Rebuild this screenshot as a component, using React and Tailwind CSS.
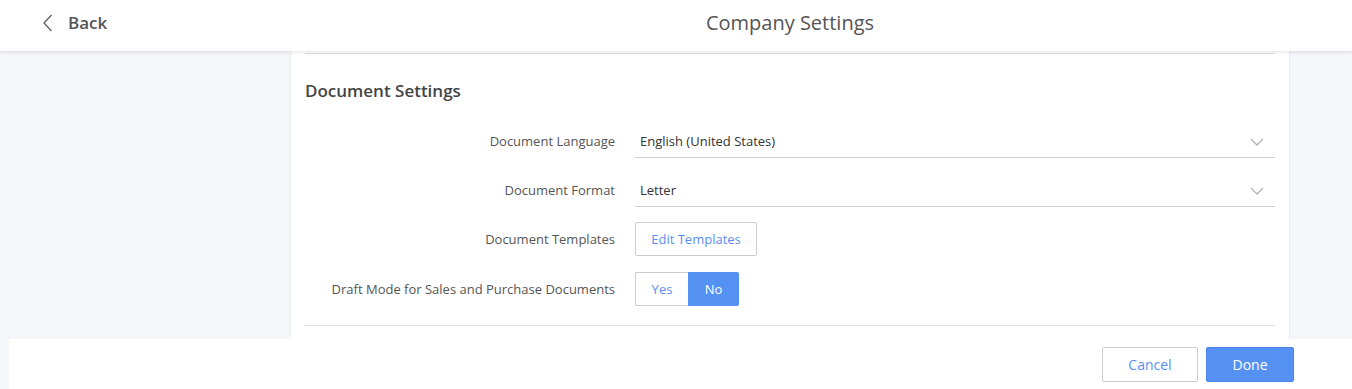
import React from 'react';

const font = { fontFamily: '"Open Sans", "Noto Sans", sans-serif' };

function Chevron() {
  return (
    <svg width="14" height="8" viewBox="0 0 14 8" fill="none" className="shrink-0">
      <path d="M1 1l6 6 6-6" stroke="#b3b3b3" strokeWidth="1.3" />
    </svg>
  );
}

function Row({ label, children, className = '' }) {
  return (
    <div className={`flex items-center h-[34px] ${className}`}>
      <div className="w-[310px] text-right text-[13px] text-[#555] pt-[2px]">{label}</div>
      <div className="ml-[20px] w-[640px] h-full flex items-center">{children}</div>
    </div>
  );
}

function SelectField({ value }) {
  return (
    <div className="w-full h-full flex items-center justify-between border-b border-[#cfcfcf] pl-[5px] pr-[11px] pt-[2px]">
      <span className="text-[13px] text-[#333]">{value}</span>
      <Chevron />
    </div>
  );
}

export default function App() {
  return (
    <div style={font} className="w-[1352px] h-[389px] overflow-hidden bg-[#f5f6fa] flex flex-col">
      <header className="relative z-10 h-[51px] shrink-0 bg-white shadow-[0_1px_4px_rgba(0,0,0,0.12)] flex items-center pb-[6px]">
        <div className="w-[290px] flex items-center pl-[42px]">
          <svg width="11" height="18" viewBox="0 0 11 18" fill="none">
            <path d="M9.5 1L2 9l7.5 8" stroke="#666" strokeWidth="1.4" />
          </svg>
          <span className="ml-[15px] text-[17px] font-semibold text-[#555]">Back</span>
        </div>
        <div className="w-[1000px] text-center text-[20px] text-[#555]">Company Settings</div>
      </header>

      <main className="flex-1 min-h-0 flex">
        <div className="ml-[290px] w-[1000px] bg-white border-x border-[#eceef3] px-[14px]">
          <div className="mt-[2px] border-t border-[#dedede]" />
          <h2 className="mt-[25px] text-[17px] leading-[24px] font-semibold text-[#444]">Document Settings</h2>
          <div className="mt-[21px] flex flex-col gap-[15px]">
            <Row label="Document Language">
              <SelectField value="English (United States)" />
            </Row>
            <Row label="Document Format">
              <SelectField value="Letter" />
            </Row>
            <Row label="Document Templates">
              <button className="w-[122px] h-[34px] pt-px border border-[#cccccc] rounded-[2px] text-[13px] text-[#5b8ef0] bg-white">
                Edit Templates
              </button>
            </Row>
            <Row label="Draft Mode for Sales and Purchase Documents" className="mt-px">
              <div className="flex h-[34px]">
                <button className="w-[53px] pt-px border border-r-0 border-[#cccccc] rounded-l-[2px] text-[13px] text-[#5b8ef0] bg-white">Yes</button>
                <button className="w-[51px] pt-px rounded-r-[2px] text-[13px] text-white bg-[#5591f3]">No</button>
              </div>
            </Row>
          </div>
          <div className="mt-[19px] border-t border-[#dedede]" />
        </div>
      </main>

      <footer className="ml-[9px] h-[50px] shrink-0 bg-white flex items-start justify-end pt-[8px] pr-[58px] gap-[8px]">
        <button className="w-[96px] h-[35px] border border-[#cccccc] rounded-[2px] text-[14px] text-[#5b8ef0] bg-white">Cancel</button>
        <button className="w-[88px] h-[35px] border border-[#4a86ea] rounded-[2px] text-[14px] text-white bg-[#5591f3]">Done</button>
      </footer>
    </div>
  );
}
